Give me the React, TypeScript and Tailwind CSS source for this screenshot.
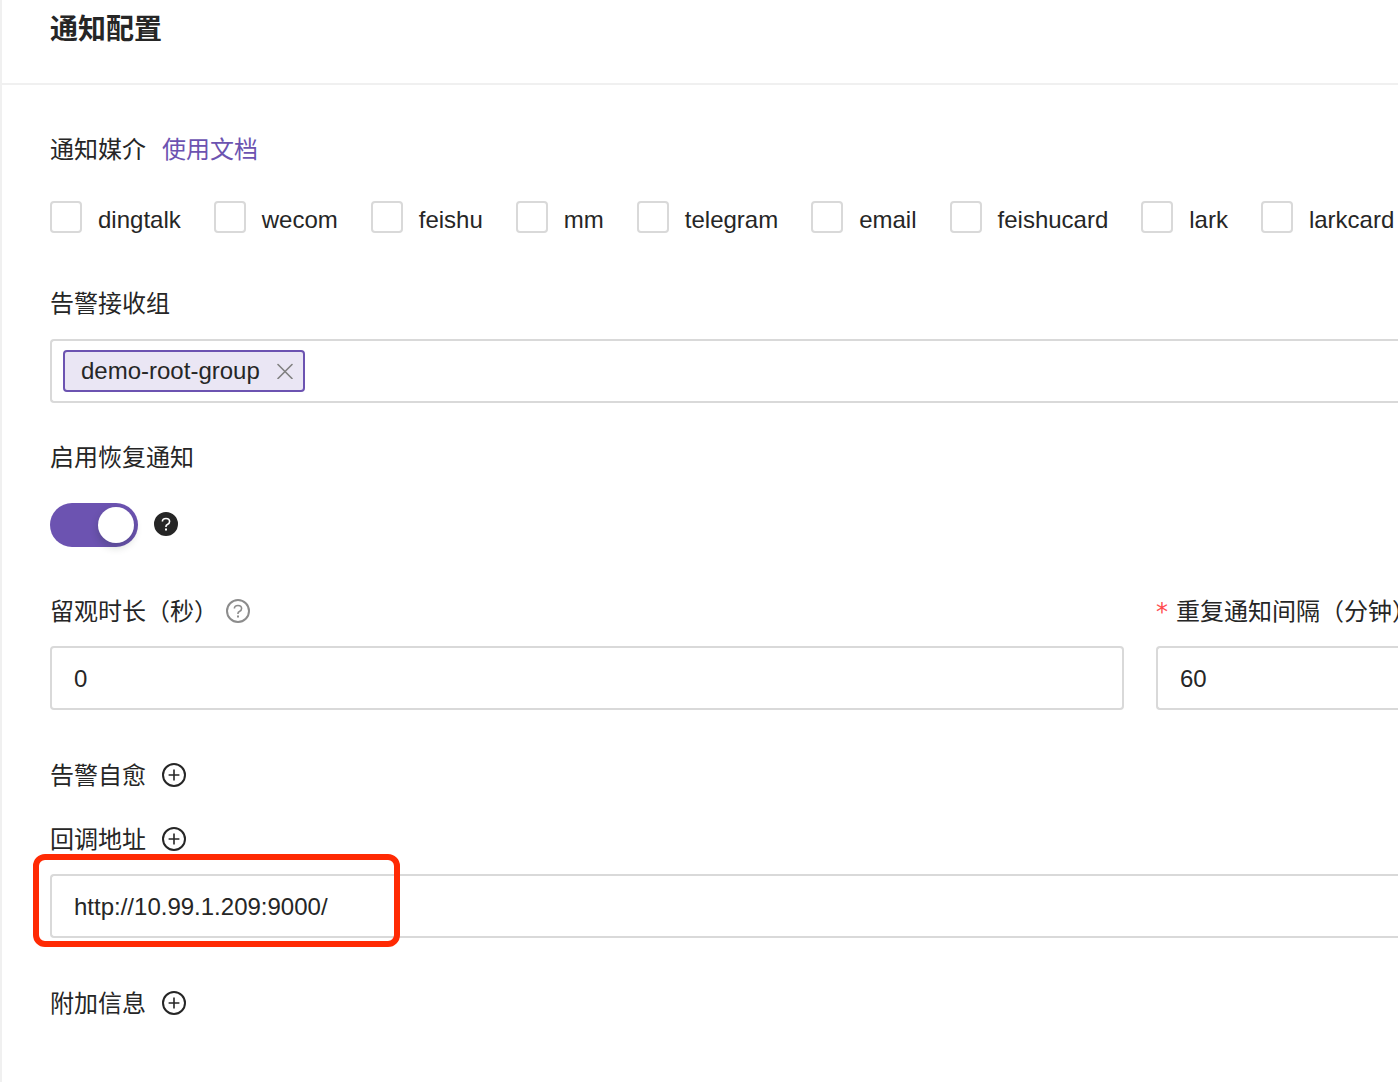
import { useState } from "react";
import type { ReactNode } from "react";

const channels = [
  "dingtalk",
  "wecom",
  "feishu",
  "mm",
  "telegram",
  "email",
  "feishucard",
  "lark",
  "larkcard",
];

const openInput =
  "block h-16 w-full rounded-l border-2 border-r-0 border-[#d9d9d9] bg-white px-[22px] pt-0.5 outline-none";

function PlusCircle() {
  return (
    <svg viewBox="0 0 24 24" className="size-6" fill="none" stroke="currentColor">
      <circle cx="12" cy="12" r="11" strokeWidth="2" />
      <path d="M12 6.6v10.8M6.6 12h10.8" strokeWidth="1.6" />
    </svg>
  );
}

function Question({ filled }: { filled?: boolean }) {
  return (
    <svg viewBox="0 0 24 24" className="size-6" fill="none" stroke="currentColor">
      <circle
        cx="12"
        cy="12"
        r="11"
        strokeWidth="2"
        fill={filled ? "currentColor" : "none"}
      />
      <g stroke={filled ? "#ffffff" : "currentColor"}>
        <path
          d="M8.4 9.6C8.4 7.7 10 6.5 12 6.5s3.6 1.2 3.6 3.1c0 1.4-.9 2.4-2.2 2.9-.9.4-1.4.9-1.4 1.8v.8"
          strokeWidth="1.6"
        />
        <path d="M11 17.5h2" strokeWidth="2" />
      </g>
    </svg>
  );
}

function AddRow({ label }: { label: ReactNode }) {
  return (
    <div className="flex h-8 gap-4">
      {label}
      <button type="button" aria-label="添加" className="mt-[3px] size-6">
        <PlusCircle />
      </button>
    </div>
  );
}

export default function App() {
  const [recovery, setRecovery] = useState(true);
  const [groups, setGroups] = useState(["demo-root-group"]);

  return (
    <main className="min-h-screen overflow-hidden border-l-2 border-[#f0f0f0] bg-white font-['Liberation_Sans','Noto_Sans_CJK_SC',sans-serif] text-2xl leading-8 text-[#262626]">
      <header className="border-b-2 border-[#f0f0f0] px-12 pt-2.5 pb-[33px]">
        <h1 className="text-[28px] leading-10 font-bold">通知配置</h1>
      </header>

      <form className="pt-[49px] pl-12">
        <fieldset>
          <legend className="flex gap-4">
            通知媒介
            <a href="#docs" className="text-[#6c53b1]">
              使用文档
            </a>
          </legend>
          <div className="mt-[35px] flex gap-[33px]">
            {channels.map((name) => (
              <label key={name} className="flex shrink-0 gap-4 leading-[38px]">
                <input
                  type="checkbox"
                  className="size-8 appearance-none rounded border-2 border-[#d9d9d9] bg-white checked:bg-[#6c53b1]"
                />
                {name}
              </label>
            ))}
          </div>
        </fieldset>

        <div className="mt-[49px]">
          <label htmlFor="groups" className="block">
            告警接收组
          </label>
          <div className="mt-[19px] flex h-16 items-center gap-2 rounded-l border-2 border-r-0 border-[#d9d9d9] pl-[11px]">
            {groups.map((group) => (
              <span
                key={group}
                className="flex h-[42px] min-w-[242px] items-center justify-between rounded border-2 border-[#6c53b1] bg-[#eae6f4] pr-2.5 pl-4 leading-[38px]"
              >
                {group}
                <button
                  type="button"
                  aria-label={`移除 ${group}`}
                  onClick={() => setGroups(groups.filter((g) => g !== group))}
                >
                  <svg
                    viewBox="0 0 16 16"
                    className="size-4"
                    fill="none"
                    stroke="#808080"
                    strokeWidth="1.6"
                    strokeLinecap="round"
                  >
                    <path d="M1 1.5l14 14M15 1.5l-14 14" />
                  </svg>
                </button>
              </span>
            ))}
            <input id="groups" className="min-w-0 flex-1 outline-none" />
          </div>
        </div>

        <div className="mt-[39px]">
          <span id="recovery-label" className="block">
            启用恢复通知
          </span>
          <div className="mt-[29px] flex gap-4">
            <button
              type="button"
              role="switch"
              aria-checked={recovery}
              aria-labelledby="recovery-label"
              onClick={() => setRecovery(!recovery)}
              className="flex h-11 w-[88px] items-center justify-start rounded-full bg-[#bfbfbf] px-1 aria-checked:justify-end aria-checked:bg-[#6c53b1]"
            >
              <span className="size-9 rounded-full bg-white shadow-[0_4px_8px_rgba(0,35,11,0.2)]" />
            </button>
            <span className="mt-[9px]">
              <Question filled />
            </span>
          </div>
        </div>

        <div className="mt-[49px] grid grid-cols-[minmax(0,1fr)_242px] gap-8">
          <div>
            <div className="flex gap-2">
              <label htmlFor="observe">留观时长（秒）</label>
              <span className="mt-[3px] text-[#8c8c8c]">
                <Question />
              </span>
            </div>
            <input
              id="observe"
              defaultValue="0"
              className="mt-[18px] block h-16 w-full rounded border-2 border-[#d9d9d9] px-[22px] pt-0.5 outline-none"
            />
          </div>
          <div>
            <label htmlFor="interval" className="flex gap-2 whitespace-nowrap">
              <span className="w-3 font-['DejaVu_Sans',sans-serif] text-[#ff4d4f]">*</span>
              重复通知间隔（分钟）
            </label>
            <input id="interval" defaultValue="60" className={`mt-[18px] ${openInput}`} />
          </div>
        </div>

        <div className="mt-[50px] flex flex-col gap-8">
          <AddRow label={<span>告警自愈</span>} />
          <div className="relative">
            <AddRow label={<label htmlFor="callback">回调地址</label>} />
            <input
              id="callback"
              defaultValue="http://10.99.1.209:9000/"
              className={`mt-[18px] ${openInput}`}
            />
            <div className="pointer-events-none absolute top-[30px] -left-[17px] h-[93px] w-[367px] rounded-xl border-6 border-[#ff2a04]" />
          </div>
        </div>
        <div className="mt-[50px]">
          <AddRow label={<span>附加信息</span>} />
        </div>
      </form>
    </main>
  );
}
